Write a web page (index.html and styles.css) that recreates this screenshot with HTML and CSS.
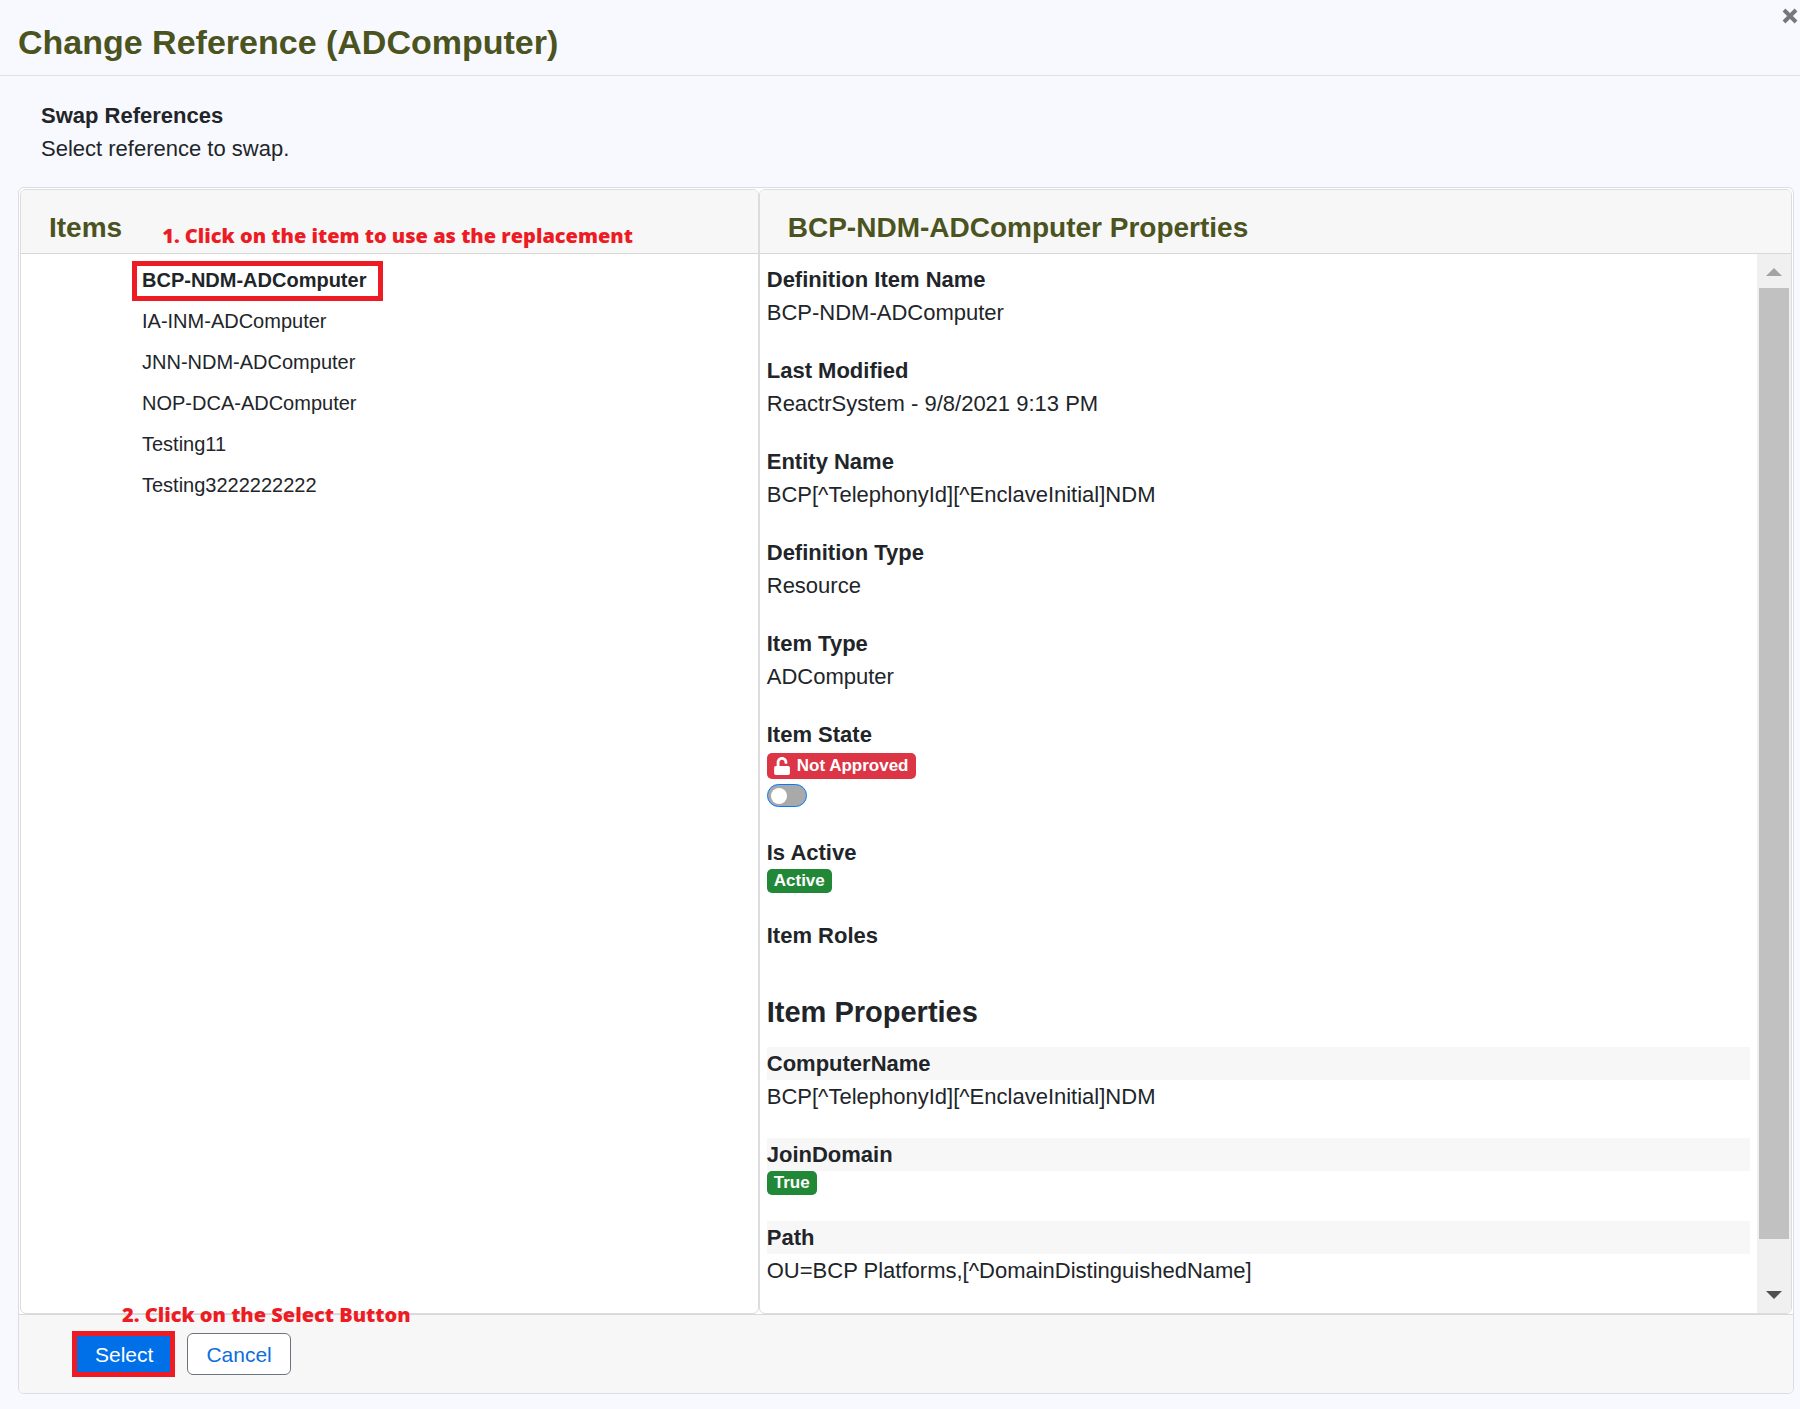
FILE: index.html
```html
<!DOCTYPE html>
<html lang="en">
<head>
<meta charset="utf-8">
<title>Change Reference (ADComputer)</title>
<link rel="stylesheet" href="styles.css">
</head>
<body>
<header class="modal-header">
  <h1 class="modal-title">Change Reference (ADComputer)</h1>
  <button class="close" type="button" aria-label="Close">
    <svg viewBox="0 0 16 16" width="16" height="16" aria-hidden="true"><path d="M2 2L14 14M14 2L2 14" stroke="currentColor" stroke-width="4" fill="none"/></svg>
  </button>
</header>
<main class="modal-body">
  <section class="intro">
    <h2 class="label">Swap References</h2>
    <p class="value">Select reference to swap.</p>
  </section>
  <section class="card">
    <div class="panels">
      <section class="panel panel-items">
        <div class="panel-header">
          <h2 class="panel-title">Items</h2>
          <p class="note">1. Click on the item to use as the replacement</p>
        </div>
        <ul class="items">
          <li><button class="item item-selected" type="button">BCP-NDM-ADComputer</button></li>
          <li><button class="item" type="button">IA-INM-ADComputer</button></li>
          <li><button class="item" type="button">JNN-NDM-ADComputer</button></li>
          <li><button class="item" type="button">NOP-DCA-ADComputer</button></li>
          <li><button class="item" type="button">Testing11</button></li>
          <li><button class="item" type="button">Testing3222222222</button></li>
        </ul>
      </section>
      <section class="panel panel-details">
        <div class="panel-header">
          <h2 class="panel-title">BCP-NDM-ADComputer Properties</h2>
        </div>
        <div class="details">
          <div class="details-content">
            <dl class="fields">
              <div><dt class="label">Definition Item Name</dt><dd class="value">BCP-NDM-ADComputer</dd></div>
              <div><dt class="label">Last Modified</dt><dd class="value">ReactrSystem - 9/8/2021 9:13 PM</dd></div>
              <div><dt class="label">Entity Name</dt><dd class="value">BCP[^TelephonyId][^EnclaveInitial]NDM</dd></div>
              <div><dt class="label">Definition Type</dt><dd class="value">Resource</dd></div>
              <div><dt class="label">Item Type</dt><dd class="value">ADComputer</dd></div>
              <div>
                <dt class="label">Item State</dt>
                <dd class="state">
                  <span class="badge badge-danger">
                    <svg viewBox="0 0 448 512" width="16" height="18" aria-hidden="true"><path fill="currentColor" d="M400 256H152V152.9c0-39.6 31.7-72.5 71.3-72.9 40-.4 72.7 32.1 72.7 72v16c0 13.3 10.7 24 24 24h32c13.3 0 24-10.7 24-24v-16C376 68 307.5-.3 223.5 0 139.5.3 72 69.5 72 153.5V256H48c-26.5 0-48 21.5-48 48v160c0 26.5 21.5 48 48 48h352c26.5 0 48-21.5 48-48V304c0-26.5-21.5-48-48-48z"/></svg>
                    Not Approved
                  </span>
                  <input class="switch" type="checkbox" role="switch" aria-label="Approved">
                </dd>
              </div>
              <div><dt class="label">Is Active</dt><dd class="flag"><span class="badge badge-success">Active</span></dd></div>
              <div><dt class="label">Item Roles</dt></div>
            </dl>
            <h3 class="section-title">Item Properties</h3>
            <dl class="fields fields-striped">
              <div><dt class="label">ComputerName</dt><dd class="value">BCP[^TelephonyId][^EnclaveInitial]NDM</dd></div>
              <div><dt class="label">JoinDomain</dt><dd class="flag"><span class="badge badge-success">True</span></dd></div>
              <div><dt class="label">Path</dt><dd class="value">OU=BCP Platforms,[^DomainDistinguishedName]</dd></div>
            </dl>
          </div>
          <div class="scrollbar" aria-hidden="true">
            <svg class="arrow-up" viewBox="0 0 16 8" width="16" height="8"><path d="M8 0L16 8H0z" fill="currentColor"/></svg>
            <div class="track"><div class="thumb"></div></div>
            <svg class="arrow-down" viewBox="0 0 16 8" width="16" height="8"><path d="M0 0H16L8 8z" fill="currentColor"/></svg>
          </div>
        </div>
      </section>
    </div>
    <footer class="card-footer">
      <p class="note note-footer">2. Click on the Select Button</p>
      <button class="btn btn-primary" type="button">Select</button>
      <button class="btn btn-outline" type="button">Cancel</button>
    </footer>
  </section>
</main>
</body>
</html>
```
FILE: styles.css
```css
* {
  box-sizing: border-box;
}

body {
  margin: 0;
  min-height: 100vh;
  display: flex;
  flex-direction: column;
  background: #f8f9ff;
  color: #212529;
  font: 22px/33px "Liberation Sans", Arial, sans-serif;
}

h1, h2, h3, p, ul, dl, dd {
  margin: 0;
  padding: 0;
}

button {
  font: inherit;
  color: inherit;
  cursor: pointer;
}

.modal-header {
  display: flex;
  justify-content: space-between;
  align-items: flex-start;
  padding: 20px 0 10px 18px;
  border-bottom: 1px solid #dee2e6;
}

.modal-title {
  color: #4b5320;
  font-size: 34px;
  line-height: 45px;
}

.close {
  display: flex;
  margin: -12px 2px 0 0;
  padding: 0;
  border: 0;
  background: none;
  color: #77777b;
}

.modal-body {
  flex: 1;
  display: flex;
  flex-direction: column;
  padding: 23px 6px 15px 18px;
}

.intro {
  padding: 0 23px 22px;
}

.label {
  font-size: 22px;
  font-weight: bold;
  line-height: 33px;
}

.card {
  flex: 1;
  display: flex;
  flex-direction: column;
  border: 1px solid #dcdde0;
  border-radius: 6px;
  background: #fff;
}

.panels {
  flex: 1;
  display: grid;
  grid-template-columns: 5fr 7fr;
  padding: 1px 0 0 1px;
}

.panel {
  min-width: 0;
  display: flex;
  flex-direction: column;
  border: 1px solid #dcdcdc;
  border-radius: 6px;
  overflow: hidden;
}

.panel-details {
  margin-right: 1px;
}

.panel-header {
  display: flex;
  gap: 40px;
  padding: 17px 28px 4px;
  background: #f7f7f7;
  border-bottom: 1px solid #d8d8d8;
}

.panel-title {
  color: #4b5320;
  font-size: 28px;
  line-height: 42px;
}

.note {
  color: #ed1c24;
  font-family: "Open Sans", "DejaVu Sans", sans-serif;
  font-size: 20px;
  font-weight: 800;
  line-height: 26px;
  white-space: nowrap;
}

.panel-header .note {
  align-self: flex-end;
}

.items {
  padding: 7px 0 0 111px;
  list-style: none;
  font-size: 20px;
}

.items li {
  display: flex;
  padding-bottom: 1px;
}

.item {
  height: 40px;
  padding: 0 12px 2px 5px;
  border: 5px solid transparent;
  background: none;
  line-height: 28px;
}

.item-selected {
  border-color: #ed1c24;
  font-weight: bold;
}

.details {
  flex: 1;
  display: flex;
}

.details-content {
  flex: 1;
  padding: 9px 7px 7px;
}

.fields {
  display: flex;
  flex-direction: column;
  gap: 25px;
}

.fields-striped .label {
  background: #f7f7f7;
}

.state {
  display: flex;
  flex-direction: column;
  align-items: flex-start;
  gap: 5px;
  padding: 2px 0 4px;
}

.flag {
  display: flex;
  padding-bottom: 1px;
}

.badge {
  display: inline-flex;
  align-items: center;
  gap: 7px;
  padding: 2px 7px;
  border-radius: 5px;
  color: #fff;
  font-size: 17px;
  font-weight: bold;
  line-height: 20px;
}

.badge-danger {
  padding: 3px 7px;
  background: #dc3545;
}

.badge-success {
  background: #218838;
}

.switch {
  appearance: none;
  display: flex;
  align-items: center;
  width: 40px;
  height: 23px;
  margin: 0;
  padding: 0 3px;
  border: 1px solid #007bff;
  border-radius: 12px;
  background: #a9a9a9;
}

.switch::before {
  content: "";
  width: 16px;
  height: 16px;
  border-radius: 50%;
  background: #fff;
}

.switch:checked {
  justify-content: flex-end;
  background: #007bff;
}

.section-title {
  padding: 43px 0 17px;
  font-size: 29px;
  line-height: 35px;
}

.scrollbar {
  width: 34px;
  display: flex;
  flex-direction: column;
  align-items: center;
  gap: 12px;
  padding: 14px 0;
  background: #f0f0f0;
}

.arrow-up {
  color: #a3a3a3;
}

.arrow-down {
  color: #505050;
}

.track {
  flex: 1;
  width: 30px;
}

.thumb {
  height: 96%;
  background: #c1c1c1;
}

.card-footer {
  position: relative;
  display: flex;
  align-items: center;
  gap: 12px;
  padding: 16px 53px;
  border-top: 1px solid #d8d8d8;
  border-radius: 0 0 5px 5px;
  background: #f7f7f7;
}

.note-footer {
  position: absolute;
  top: -13px;
  left: 103px;
}

.btn {
  height: 42px;
  padding: 2px 18px 0;
  border: 1px solid #6c757d;
  border-radius: 6px;
  background: #fff;
  font-size: 21px;
  line-height: 30px;
}

.btn-primary {
  height: 46px;
  padding: 2px 17px 0 18px;
  border: 5px solid #ed1c24;
  border-radius: 0;
  background: #0070e8;
  color: #fff;
}

.btn-outline {
  color: #0d6edc;
}
```
